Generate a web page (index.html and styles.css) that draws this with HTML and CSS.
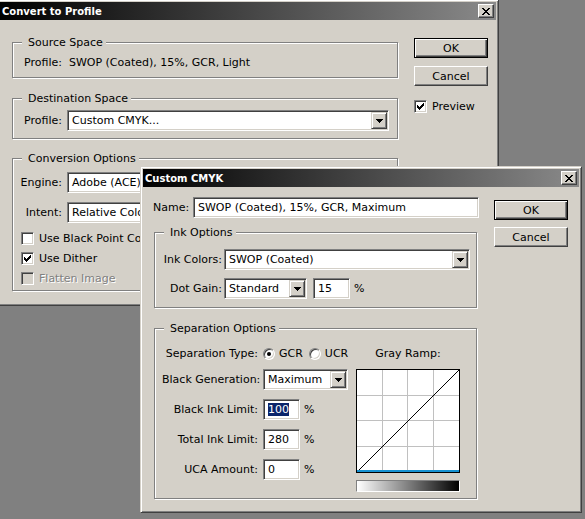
FILE: index.html
```html
<!DOCTYPE html>
<html lang="en">
<head>
<meta charset="utf-8">
<title>Convert to Profile</title>
<link rel="stylesheet" href="styles.css">
</head>
<body>
<div class="win win-convert">
  <div class="titlebar">
    <span class="title">Convert to Profile</span>
    <span class="close"><svg width="8" height="7" viewBox="0 0 8 7" shape-rendering="crispEdges"><path d="M0 0h2v1H0zM6 0h2v1H6zM1 1h2v1H1zM5 1h2v1H5zM2 2h4v1H2zM3 3h2v1H3zM2 4h4v1H2zM1 5h2v1H1zM5 5h2v1H5zM0 6h2v1H0zM6 6h2v1H6z"/></svg></span>
  </div>
  <div class="dlg convert-dlg">
    <div class="convert-main">
      <div class="group g-source">
        <div class="group-title">Source Space</div>
        <div class="src-profile">Profile:&nbsp; SWOP (Coated), 15%, GCR, Light</div>
      </div>
      <div class="group g-dest">
        <div class="group-title">Destination Space</div>
        <div class="frow dest-row">
          <span class="lbl conv-lbl">Profile:</span>
          <div class="select conv-select"><span class="val">Custom CMYK...</span><span class="drop"><svg width="7" height="4" viewBox="0 0 7 4" shape-rendering="crispEdges"><path d="M0 0h7v1H0zM1 1h5v1H1zM2 2h3v1H2zM3 3h1v1H3z"/></svg></span></div>
        </div>
      </div>
      <div class="group g-conv">
        <div class="group-title">Conversion Options</div>
        <div class="frow engine-row">
          <span class="lbl conv-lbl">Engine:</span>
          <div class="select conv-select"><span class="val">Adobe (ACE)</span><span class="drop"><svg width="7" height="4" viewBox="0 0 7 4" shape-rendering="crispEdges"><path d="M0 0h7v1H0zM1 1h5v1H1zM2 2h3v1H2zM3 3h1v1H3z"/></svg></span></div>
        </div>
        <div class="frow intent-row">
          <span class="lbl conv-lbl">Intent:</span>
          <div class="select conv-select"><span class="val">Relative Colorimetric</span><span class="drop"><svg width="7" height="4" viewBox="0 0 7 4" shape-rendering="crispEdges"><path d="M0 0h7v1H0zM1 1h5v1H1zM2 2h3v1H2zM3 3h1v1H3z"/></svg></span></div>
        </div>
        <div class="conv-chks">
          <div class="chk"><span class="cb"></span><span>Use Black Point Compensation</span></div>
          <div class="chk"><span class="cb"><svg width="7" height="7" viewBox="0 0 7 7" shape-rendering="crispEdges"><path d="M6 0h1v1H6zM5 1h2v1H5zM0 2h1v1H0zM4 2h3v1H4zM0 3h2v1H0zM3 3h3v1H3zM0 4h5v1H0zM1 5h3v1H1zM2 6h1v1H2z"/></svg></span><span>Use Dither</span></div>
          <div class="chk disabled"><span class="cb"></span><span>Flatten Image</span></div>
        </div>
      </div>
    </div>
    <div class="btn-col convert-btns">
      <div class="btn default">OK</div>
      <div class="btn btn-second">Cancel</div>
      <div class="chk preview"><span class="cb"><svg width="7" height="7" viewBox="0 0 7 7" shape-rendering="crispEdges"><path d="M6 0h1v1H6zM5 1h2v1H5zM0 2h1v1H0zM4 2h3v1H4zM0 3h2v1H0zM3 3h3v1H3zM0 4h5v1H0zM1 5h3v1H1zM2 6h1v1H2z"/></svg></span><span>Preview</span></div>
    </div>
  </div>
</div>

<div class="win win-cmyk">
  <div class="titlebar">
    <span class="title">Custom CMYK</span>
    <span class="close"><svg width="8" height="7" viewBox="0 0 8 7" shape-rendering="crispEdges"><path d="M0 0h2v1H0zM6 0h2v1H6zM1 1h2v1H1zM5 1h2v1H5zM2 2h4v1H2zM3 3h2v1H3zM2 4h4v1H2zM1 5h2v1H1zM5 5h2v1H5zM0 6h2v1H0zM6 6h2v1H6z"/></svg></span>
  </div>
  <div class="dlg cmyk-dlg">
    <div class="cmyk-main">
      <div class="frow name-row">
        <span class="lbl name-lbl">Name:</span>
        <div class="input name-input">SWOP (Coated), 15%, GCR, Maximum</div>
      </div>
      <div class="group g-ink">
        <div class="group-title">Ink Options</div>
        <div class="ink-grid">
          <span class="lbl">Ink Colors:</span>
          <div class="select ink-select"><span class="val">SWOP (Coated)</span><span class="drop"><svg width="7" height="4" viewBox="0 0 7 4" shape-rendering="crispEdges"><path d="M0 0h7v1H0zM1 1h5v1H1zM2 2h3v1H2zM3 3h1v1H3z"/></svg></span></div>
          <span class="lbl">Dot Gain:</span>
          <div class="dot-gain">
            <div class="select dg-select"><span class="val">Standard</span><span class="drop"><svg width="7" height="4" viewBox="0 0 7 4" shape-rendering="crispEdges"><path d="M0 0h7v1H0zM1 1h5v1H1zM2 2h3v1H2zM3 3h1v1H3z"/></svg></span></div>
            <div class="input num-input">15</div>
            <span class="pct">%</span>
          </div>
        </div>
      </div>
      <div class="group g-sep">
        <div class="group-title">Separation Options</div>
        <div class="sep-body">
          <div class="sep-form">
            <span class="lbl">Separation Type:</span>
            <div class="radios">
              <span class="radio on"></span><span class="rlbl">GCR</span>
              <span class="radio r2"></span><span class="rlbl">UCR</span>
            </div>
            <span class="lbl">Black Generation:</span>
            <div class="select bg-select"><span class="val">Maximum</span><span class="drop"><svg width="7" height="4" viewBox="0 0 7 4" shape-rendering="crispEdges"><path d="M0 0h7v1H0zM1 1h5v1H1zM2 2h3v1H2zM3 3h1v1H3z"/></svg></span></div>
            <span class="lbl">Black Ink Limit:</span>
            <div class="numrow"><div class="input num-input"><span class="sel">100</span></div><span class="pct">%</span></div>
            <span class="lbl">Total Ink Limit:</span>
            <div class="numrow"><div class="input num-input">280</div><span class="pct">%</span></div>
            <span class="lbl">UCA Amount:</span>
            <div class="numrow"><div class="input num-input">0</div><span class="pct">%</span></div>
          </div>
          <div class="ramp-col">
            <div class="ramp-label">Gray Ramp:</div>
            <svg class="ramp" width="104" height="104" viewBox="0 0 104 104" shape-rendering="crispEdges">
              <rect x="0.5" y="0.5" width="103" height="103" fill="#fff" stroke="#000"/>
              <g stroke="#c0c0c0">
                <line x1="26.5" y1="1" x2="26.5" y2="103"/>
                <line x1="51.5" y1="1" x2="51.5" y2="103"/>
                <line x1="77.5" y1="1" x2="77.5" y2="103"/>
                <line x1="1" y1="26.5" x2="103" y2="26.5"/>
                <line x1="1" y1="51.5" x2="103" y2="51.5"/>
                <line x1="1" y1="77.5" x2="103" y2="77.5"/>
              </g>
              <line x1="1" y1="103" x2="103" y2="1" stroke="#000"/>
              <rect x="1" y="101" width="102" height="2" fill="#1591d1"/>
            </svg>
            <div class="gradbar"></div>
          </div>
        </div>
      </div>
    </div>
    <div class="btn-col cmyk-btns">
      <div class="btn default">OK</div>
      <div class="btn btn-second">Cancel</div>
    </div>
  </div>
</div>
</body>
</html>
```

FILE: styles.css
```css
* { box-sizing: border-box; }
html, body { margin: 0; padding: 0; }
body {
  width: 585px;
  height: 519px;
  overflow: hidden;
  position: relative;
  background: #808080;
  font-family: "DejaVu Sans", Tahoma, sans-serif;
  font-size: 11px;
  line-height: 13px;
  color: #000;
}

/* windows */
.win {
  position: absolute;
  display: flex;
  flex-direction: column;
  background: #d4d0c8;
  border: 1px solid;
  border-color: #d4d0c8 #404040 #404040 #d4d0c8;
  box-shadow: inset 1px 1px #fff, inset -1px -1px #808080;
  padding: 2px;
}
.win-convert { left: -3px; top: -1px; width: 502px; height: 307px; }
.win-cmyk { left: 140px; top: 166px; width: 442px; height: 347px; }

.titlebar {
  flex: none;
  height: 18px;
  display: flex;
  align-items: center;
  justify-content: space-between;
  padding: 0 2px 0 2px;
  background: linear-gradient(90deg, #000 0%, #8a8a8a 100%);
  color: #fff;
  font-weight: bold;
  font-size: 10px;
}
.close {
  width: 16px;
  height: 14px;
  display: flex;
  align-items: center;
  justify-content: center;
  background: #d4d0c8;
  border: 1px solid;
  border-color: #fff #404040 #404040 #fff;
  box-shadow: inset -1px -1px #808080;
}
.close svg { fill: #000; display: block; }

/* dialog bodies */
.dlg { display: flex; align-items: flex-start; }
.convert-dlg { padding: 18px 0 0 12px; gap: 16px; }
.cmyk-dlg { padding: 10px 0 0 10px; gap: 15px; }
.convert-main { width: 386px; flex: none; }
.cmyk-main { width: 326px; flex: none; }

/* group boxes */
.group {
  border: 1px solid #808080;
  box-shadow: inset 1px 1px #fff, 1px 1px #fff;
}
.group-title {
  margin-top: -7px;
  margin-left: 9px;
  padding: 0 3px 0 6px;
  width: max-content;
  background: #d4d0c8;
}
.g-source { margin-top: 4px; padding-bottom: 8px; }
.src-profile { margin: 7px 0 0 11px; }
.g-dest { margin-top: 20px; padding-bottom: 7px; }
.dest-row { margin-top: 5px; }
.g-conv { margin-top: 19px; padding-bottom: 5px; }
.engine-row { margin-top: 7px; }
.intent-row { margin-top: 9px; }
.conv-chks {
  margin-top: 9px;
  padding-left: 8px;
  display: flex;
  flex-direction: column;
  gap: 7px;
}

.frow { display: flex; align-items: center; }
.lbl { white-space: nowrap; }
.conv-lbl { width: 49px; text-align: right; margin-right: 5px; flex: none; }
.conv-select { width: 322px; }

/* fields */
.select, .input {
  height: 21px;
  background: #fff;
  border: 1px solid;
  border-color: #808080 #fff #fff #808080;
  box-shadow: inset 1px 1px #404040, inset -1px -1px #d4d0c8;
  white-space: nowrap;
  overflow: hidden;
}
.select { display: flex; padding: 1px; }
.select .val { flex: 1; padding-left: 3px; line-height: 17px; overflow: hidden; }
.drop {
  flex: none;
  width: 16px;
  height: 17px;
  display: flex;
  align-items: center;
  justify-content: center;
  background: #d4d0c8;
  border: 1px solid;
  border-color: #d4d0c8 #404040 #404040 #d4d0c8;
  box-shadow: inset 1px 1px #fff, inset -1px -1px #808080;
}
.drop svg { fill: #000; display: block; }
.input { padding: 1px 1px 1px 4px; line-height: 17px; }

/* checkboxes */
.chk { display: flex; align-items: center; gap: 5px; white-space: nowrap; }
.cb {
  flex: none;
  width: 13px;
  height: 13px;
  display: flex;
  align-items: center;
  justify-content: center;
  background: #fff;
  border: 1px solid;
  border-color: #808080 #fff #fff #808080;
  box-shadow: inset 1px 1px #404040, inset -1px -1px #d4d0c8;
}
.cb svg { display: block; fill: #000; }
.chk.disabled .cb { background: #d4d0c8; }
.chk.disabled { color: #808080; text-shadow: 1px 1px 0 #fff; }

/* buttons */
.btn-col { display: flex; flex-direction: column; flex: none; }
.convert-btns { width: 74px; }
.cmyk-btns { width: 74px; margin-top: 3px; }
.btn {
  width: 74px;
  height: 20px;
  display: flex;
  align-items: center;
  justify-content: center;
  background: #d4d0c8;
  border: 1px solid;
  border-color: #fff #404040 #404040 #fff;
  box-shadow: inset -1px -1px #808080;
}
.btn.default {
  border-color: #000;
  box-shadow: inset 1px 1px #fff, inset -1px -1px #404040, inset -2px -2px #808080;
}
.convert-btns .btn-second { margin-top: 8px; }
.cmyk-btns .btn-second { margin-top: 7px; }
.preview { margin-top: 14px; }

/* custom cmyk */
.name-lbl { width: 36px; margin-right: 4px; flex: none; }
.name-input { flex: 1; }
.g-ink { margin: 14px 0 0 1px; width: 323px; padding-bottom: 8px; }
.ink-grid {
  margin-top: 10px;
  padding-left: 8px;
  display: grid;
  grid-template-columns: 59px auto;
  column-gap: 2px;
  row-gap: 8px;
  align-items: center;
}
.ink-grid .lbl { text-align: right; }
.ink-select { width: 246px; }
.dot-gain { display: flex; align-items: center; }
.dg-select { width: 83px; margin-right: 6px; }
.num-input { width: 37px; flex: none; }
.pct { margin-left: 4px; }

.g-sep { margin: 20px 0 0 1px; width: 323px; padding-bottom: 6px; }
.sep-body { margin-top: 12px; padding-left: 7px; display: flex; align-items: flex-start; }
.sep-form {
  display: grid;
  grid-template-columns: 96px 85px;
  column-gap: 5px;
  row-gap: 9px;
  align-items: center;
}
.sep-form .lbl { text-align: right; }
.radios { display: flex; align-items: center; white-space: nowrap; height: 13px; }
.radio {
  flex: none;
  width: 12px;
  height: 12px;
  border-radius: 50%;
  display: flex;
  align-items: center;
  justify-content: center;
  background: #fff;
  border: 1px solid;
  border-color: #808080 #fff #fff #808080;
  box-shadow: inset 1px 1px #404040, inset -1px -1px #d4d0c8;
}
.radio.on::after {
  content: "";
  width: 4px;
  height: 4px;
  border-radius: 50%;
  background: #000;
}
.rlbl { margin-left: 4px; }
.radio.r2 { margin-left: 6px; }
.bg-select { width: 85px; }
.numrow { display: flex; align-items: center; }
.sel { background: #0a246a; color: #fff; }

.ramp-col {
  margin-left: 8px;
  width: 104px;
  display: flex;
  flex-direction: column;
  align-items: center;
}
.ramp-label { line-height: 13px; }
.ramp { display: block; margin-top: 9px; }
.gradbar {
  margin-top: 7px;
  width: 104px;
  height: 12px;
  border: 1px solid;
  border-color: #808080 #fff #fff #808080;
  background: linear-gradient(90deg, #fff 0%, #000 100%);
}
```
